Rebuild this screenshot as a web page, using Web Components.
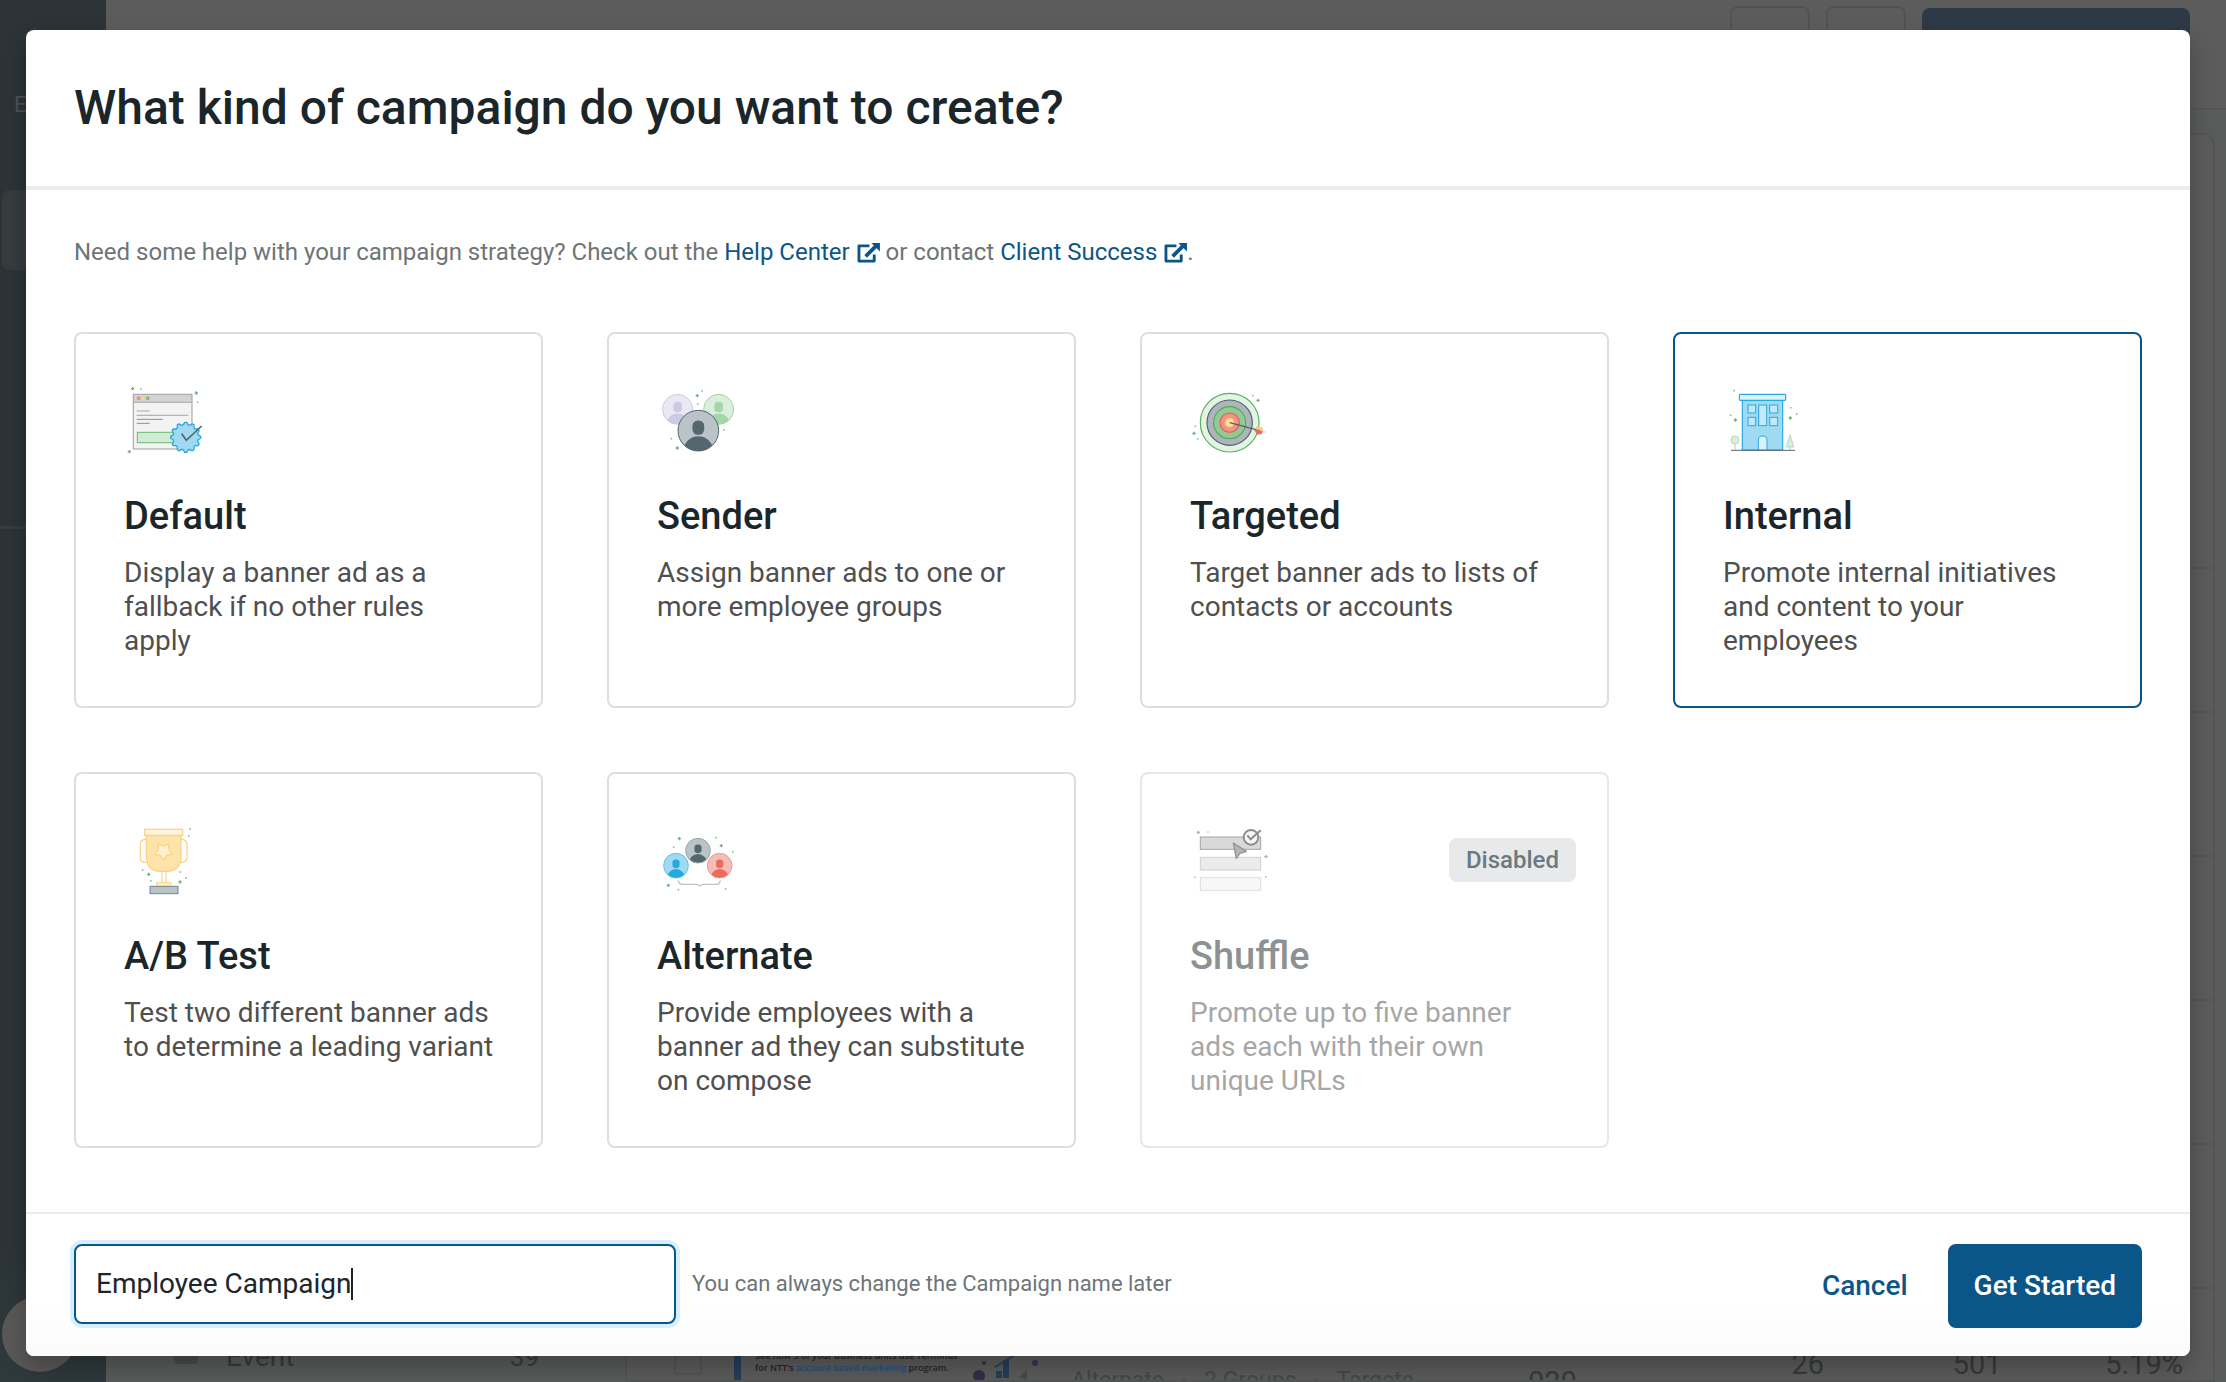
<!DOCTYPE html>
<html lang="en">
<head>
<meta charset="utf-8">
<title>Create campaign</title>
<style>
  html, body { margin: 0; height: 100%; }
  body { font-family: Roboto, "Liberation Sans", sans-serif; color: #1b262b; background: #5c5c5c; overflow: hidden; }
</style>
</head>
<body>
<app-backdrop></app-backdrop>
<campaign-dialog>
  <span slot="title">What kind of campaign do you want to create?</span>
  <span slot="help">Need some help with your campaign strategy? Check out the <external-link href="#help">Help Center</external-link> or contact <external-link href="#success">Client Success</external-link>.</span>
  <campaign-card icon="default">Default<span slot="text">Display a banner ad as a fallback if no other rules apply</span></campaign-card>
  <campaign-card icon="sender">Sender<span slot="text">Assign banner ads to one or more employee groups</span></campaign-card>
  <campaign-card icon="targeted">Targeted<span slot="text">Target banner ads to lists of contacts or accounts</span></campaign-card>
  <campaign-card icon="internal" selected>Internal<span slot="text">Promote internal initiatives and content to your employees</span></campaign-card>
  <campaign-card icon="abtest">A/B Test<span slot="text">Test two different banner ads to determine a leading variant</span></campaign-card>
  <campaign-card icon="alternate">Alternate<span slot="text">Provide employees with a banner ad they can substitute on compose</span></campaign-card>
  <campaign-card icon="shuffle" disabled>Shuffle<span slot="text">Promote up to five banner ads each with their own unique URLs</span></campaign-card>
  <name-field slot="footer" value="Employee Campaign">You can always change the Campaign name later</name-field>
  <action-button slot="actions" kind="plain">Cancel</action-button>
  <action-button slot="actions" kind="primary">Get Started</action-button>
</campaign-dialog>

<script>
const define = (name, html, setup) => customElements.define(name, class extends HTMLElement {
  constructor() {
    super();
    this.attachShadow({ mode: 'open' });
  }
  connectedCallback() {
    this.shadowRoot.innerHTML = typeof html === 'function' ? html(this) : html;
    if (setup) setup(this);
  }
});

/* Illustration helpers */
const plus = (x, y, r = 5, c = '#6cb873') =>
  `<path d="M${x - r} ${y}h${2 * r}M${x} ${y - r}v${2 * r}" stroke="${c}" stroke-width="4"/>`;
const dot = (x, y, c = '#93cc98') => `<circle cx="${x}" cy="${y}" r="3" fill="${c}"/>`;
let clipId = 0;
const person = (x, y, r, bg, fg, ring) => {
  const id = 'clip' + (clipId++);
  return `<clipPath id="${id}"><circle cx="${x}" cy="${y}" r="${r}"/></clipPath>
    <circle cx="${x}" cy="${y}" r="${r}" fill="${bg}"/>
    <g clip-path="url(#${id})" fill="${fg}">
      <rect x="${x - r * .29}" y="${y - r * .5}" width="${r * .58}" height="${r * .7}" rx="${r * .27}"/>
      <ellipse cx="${x}" cy="${y + r}" rx="${r * .74}" ry="${r * .72}"/>
    </g>
    <circle cx="${x}" cy="${y}" r="${r}" fill="none" stroke="${ring}" stroke-width="3"/>`;
};
const burst = (cx, cy, n, outer, inner) => {
  const pts = [];
  for (let i = 0; i < n * 4; i++) {
    const a = (i + .5) * Math.PI / (n * 2) - Math.PI / 2;
    const r = i % 4 < 1 || i % 4 > 2 ? outer : inner;
    pts.push((cx + r * Math.cos(a)).toFixed(1) + ',' + (cy + r * Math.sin(a)).toFixed(1));
  }
  return pts.join(' ');
};

const icons = {
  default: ['42 36 240 240', () => `
    <rect x="70" y="73" width="176" height="164" fill="#f3f3f3"/>
    <rect x="70" y="73" width="176" height="24" fill="#d3d3d3"/>
    <rect x="70" y="73" width="176" height="164" fill="none" stroke="#a9a9a9" stroke-width="3.5"/>
    <path d="M70 97h176" stroke="#a9a9a9" stroke-width="3"/>
    <circle cx="86" cy="85" r="4" fill="#f6b5ae" stroke="#ec6a5c" stroke-width="3"/>
    <circle cx="100" cy="85" r="4" fill="#ffe1a3" stroke="#fdcb6b" stroke-width="3"/>
    <circle cx="113" cy="85" r="4" fill="#a5d5a8" stroke="#4fae58" stroke-width="3"/>
    <path d="M80 123h39" stroke="#c4c4c4" stroke-width="5"/>
    <path d="M80 136h155" stroke="#b4b4b4" stroke-width="4"/>
    <path d="M80 148h78M80 160h39" stroke="#8f8f8f" stroke-width="3"/>
    <rect x="82" y="187" width="130" height="31" fill="#d2ebd3" stroke="#6cb873" stroke-width="3"/>
    <polygon points="${burst(227, 202, 12, 45, 38)}" fill="#9fdaf2" stroke="#26a9e0" stroke-width="4" stroke-linejoin="round"/>
    <path d="M215 191l14 20 46-43" fill="none" stroke="#54666e" stroke-width="5"/>
    ${plus(68, 56)}${dot(93, 57)}${plus(259, 69)}${dot(263, 97)}${plus(58, 245)}`],
  sender: ['36 36 240 240', () => `
    ${person(98, 118, 45, '#ebe8f4', '#cfcae3', '#cfcae3')}
    ${person(221, 118, 45, '#dbeedc', '#a5d5a8', '#a5d5a8')}
    ${person(160, 182, 61, '#bac3c7', '#54666e', '#54666e')}
    ${plus(157, 77)}${dot(171, 63)}${dot(158, 102)}${dot(237, 180)}${dot(79, 206)}${plus(97, 234)}`],
  targeted: ['45 36 240 240', () => `
    <circle cx="164" cy="158" r="88" fill="#e3f3e4" stroke="#57b05f" stroke-width="3.5"/>
    <circle cx="164" cy="158" r="68" fill="#aeb5ba" stroke="#54626b" stroke-width="3.5"/>
    <circle cx="164" cy="158" r="48" fill="#92c996" stroke="#4fae58" stroke-width="3.5"/>
    <circle cx="164" cy="158" r="29" fill="#f0948a" stroke="#ea5f50" stroke-width="3.5"/>
    <circle cx="164" cy="158" r="13" fill="#fde0a0" stroke="#fcc762" stroke-width="4"/>
    <path d="M164 158l90 24" stroke="#54626b" stroke-width="3.5"/>
    <path d="M238 177l8-8 14 2 6 11z" fill="#fccd73"/>
    <path d="M238 180l26 2-4 10-14 2z" fill="#ea6a5c"/>
    <path d="M262 186h10" stroke="#dedfec" stroke-width="5"/>
    ${dot(234, 77)}${plus(249, 91)}${dot(61, 169)}${plus(57, 190)}${dot(68, 207)}`],
  internal: ['39 36 240 240', () => `
    <rect x="97" y="90" width="121" height="150" fill="#9fdaf2" stroke="#26a9e0" stroke-width="3.5"/>
    <rect x="88" y="73" width="139" height="18" rx="3" fill="#d8f1fb" stroke="#26a9e0" stroke-width="3.5"/>
    <g fill="#c3e8f7" stroke="#26a9e0" stroke-width="3">
      <rect x="114" y="105" width="23" height="24"/><rect x="114" y="142" width="23" height="25"/>
      <rect x="146" y="105" width="24" height="62"/>
      <rect x="179" y="105" width="24" height="24"/><rect x="179" y="142" width="24" height="25"/>
    </g>
    <path d="M145 240v-29q0-13 13-13t13 13v29z" fill="#d8f1fb" stroke="#26a9e0" stroke-width="3"/>
    <path d="M75 222v18M240 231v9" stroke="#cfe6d0" stroke-width="5"/>
    <circle cx="75" cy="210" r="12" fill="#dbeedc" stroke="#b5d9b7" stroke-width="3"/>
    <path d="M240 194l-11 37h22z" fill="#dbeedc" stroke="#b5d9b7" stroke-width="3"/>
    <path d="M63 241h192" stroke="#54666e" stroke-width="3"/>
    ${dot(72, 62)}${dot(62, 136)}${plus(76, 150)}${dot(242, 113)}${dot(260, 132)}${plus(241, 144)}`],
  abtest: ['42 36 240 240', () => `
    <path d="M109 88q-18 0-18 16v39q0 14 18 14M213 88q18 0 18 16v39q0 14-18 14" fill="#fff" stroke="#fdcf80" stroke-width="3.5"/>
    <path d="M109 76v62q0 46 44 46h16q44 0 44-46v-62z" fill="#fee3ab" stroke="#fdcf80" stroke-width="3.5"/>
    <rect x="104" y="58" width="114" height="18" fill="#fff5df" stroke="#fdcf80" stroke-width="3.5"/>
    <path d="M156 185v34M168 185v34" stroke="#fdd48c" stroke-width="3.5"/>
    <rect x="140" y="218" width="43" height="11" fill="#fff1d0" stroke="#fdd48c" stroke-width="3"/>
    <polygon points="160,151 151,136 134,133 144,120 145,102 160,108 176,102 177,120 187,133 169,136" fill="#fff1d0" stroke="#fdcb6b" stroke-width="3" stroke-linejoin="round"/>
    <rect x="120" y="229" width="84" height="22" fill="#bac3c7" stroke="#75858c" stroke-width="3"/>
    ${dot(240, 57)}${dot(236, 78)}${dot(98, 180)}${plus(116, 193)}${dot(123, 212)}${dot(211, 186)}${dot(228, 204)}${plus(210, 216)}`],
  alternate: ['36 36 240 240', () => `
    ${person(159, 122, 37, '#bac3c7', '#54666e', '#9aa6ab')}
    ${person(93, 167, 37, '#9fdaf2', '#26a9e0', '#5fc1ea')}
    ${person(224, 167, 37, '#f5bdb7', '#ea6a5c', '#f09a90')}
    <path d="M100 211q2 12 12 12h40q9 0 12 5q3-5 12-5h38q10 0 12-12" fill="none" stroke="#bac3c7" stroke-width="4"/>
    ${plus(103, 86)}${dot(86, 112)}${dot(213, 83)}${plus(229, 107)}${dot(263, 125)}${plus(70, 226)}${dot(100, 239)}${dot(242, 237)}`],
  shuffle: ['45 36 240 240', () => `
    <rect x="76" y="81" width="181" height="37" fill="#b5b5b5" stroke="#4c4c4c" stroke-width="3"/>
    <rect x="76" y="142" width="181" height="38" fill="#d8d8d8" stroke="#a3a3a3" stroke-width="3"/>
    <rect x="76" y="203" width="181" height="38" fill="#f1f1f1" stroke="#bdbdbd" stroke-width="3"/>
    <circle cx="228" cy="82" r="22" fill="#efefef" stroke="#1c1c1c" stroke-width="6"/>
    <path d="M217 76l10 12 30-27" fill="none" stroke="#1c1c1c" stroke-width="6"/>
    <path d="M175 99l39 25-19 6-11 15z" fill="#6f6f6f" stroke="#2c2c2c" stroke-width="4" stroke-linejoin="round"/>
    ${plus(70, 67, 5, '#666')}${dot(99, 66, '#aaa')}${plus(273, 140, 5, '#666')}${dot(59, 202, '#888')}${dot(272, 201, '#888')}`],
};

define('campaign-icon', el => {
  const [box, draw] = icons[el.getAttribute('name')];
  return `<style>:host{display:block;width:80px;height:80px}svg{display:block}</style>
    <svg viewBox="${box}" width="80" height="80" fill="none" aria-hidden="true">${draw()}</svg>`;
});

define('external-link', el => `
  <style>
    :host { display: inline; }
    a { color: #0b5688; text-decoration: none; }
    svg { width: 23px; height: 21px; margin-left: 1px; vertical-align: -3px; }
  </style>
  <a href="${el.getAttribute('href')}"><slot></slot>
    <svg viewBox="0 0 24 22" fill="none" aria-hidden="true">
      <path d="M13 4H2v16h16v-7" stroke="#0b5688" stroke-width="3" stroke-linejoin="round"/>
      <path d="M9 15L20 4" stroke="#0b5688" stroke-width="4"/>
      <path d="M15 1h9v9z" fill="#0b5688"/>
    </svg></a>`);

define('campaign-card', el => {
  const off = el.hasAttribute('disabled');
  const on = el.hasAttribute('selected');
  return `
  <style>
    :host { display: flex; position: relative; }
    button { flex: 1; display: flex; flex-direction: column; align-items: flex-start; margin: 0; padding: 48px 46px 48px 48px;
      border: 2px solid #dcdfe2; border-radius: 8px; background: #fff; font: inherit; color: inherit; text-align: left; cursor: pointer; }
    button.on { border-color: #0b5688; }
    button:disabled { opacity: .5; border-color: #ccd0d4; cursor: default; }
    .name { margin-top: 30px; font-size: 38px; line-height: 48px; font-weight: 500; }
    .text { margin-top: 16px; font-size: 28px; line-height: 34px; color: #4f4f4f; }
    .badge { position: absolute; top: 66px; right: 33px; padding: 0 17px; border-radius: 8px; background: #e7e9ea;
      color: #6c797f; font-size: 24px; line-height: 44px; font-weight: 500; }
  </style>
  <button type="button" class="${on ? 'on' : ''}" aria-pressed="${on}" ${off ? 'disabled' : ''}>
    <campaign-icon name="${el.getAttribute('icon')}"></campaign-icon>
    <span class="name"><slot></slot></span>
    <span class="text"><slot name="text"></slot></span>
  </button>
  ${off ? '<span class="badge">Disabled</span>' : ''}`;
});

define('name-field', el => `
  <style>
    :host { display: flex; align-items: center; gap: 16px; }
    .box { display: flex; align-items: center; box-sizing: border-box; width: 602px; height: 80px; padding: 0 20px;
      border: 2px solid #0b5688; border-radius: 8px; background: #fff; box-shadow: 0 0 0 4px #d6efff; cursor: text; }
    input { field-sizing: content; min-width: 0; margin: 0; padding: 0; border: 0; outline: 0; background: none;
      font: 28px/36px Roboto, "Liberation Sans", sans-serif; color: #1b262b; }
    .caret { width: 2px; height: 32px; background: #1b262b; }
    label { font-size: 22px; line-height: 28px; color: #6d7577; }
  </style>
  <div class="box"><input id="name" type="text" value="${el.getAttribute('value')}"><span class="caret"></span></div>
  <label for="name"><slot></slot></label>`);

define('action-button', el => `
  <style>
    :host { display: block; }
    button { height: 84px; margin: 0; padding: 0 26px; border: 0; border-radius: 8px; background: none; color: #0b5688;
      font: 500 28px/36px Roboto, "Liberation Sans", sans-serif; cursor: pointer; }
    .primary { background: #0b5688; color: #fff; }
  </style>
  <button type="button" class="${el.getAttribute('kind')}"><slot></slot></button>`);

define('campaign-dialog', `
  <style>
    :host { position: fixed; inset: 0; display: flex; padding: 30px 36px 26px 26px; align-items: flex-start; }
    section { flex: 1; border-radius: 8px; background: #fff; box-shadow: 0 12px 24px rgba(0,0,0,.25); overflow: hidden; }
    header { padding: 48px; border-bottom: 4px solid #ebeced; }
    h1 { margin: 0; font-size: 48px; line-height: 60px; font-weight: 500; }
    .body { padding: 46px 48px 64px; }
    p { margin: 0 0 64px; font-size: 24px; line-height: 32px; color: #6d7577; }
    .grid { display: grid; grid-template-columns: repeat(4, minmax(0, 1fr)); gap: 64px; }
    footer { display: flex; align-items: flex-start; justify-content: space-between; padding: 30px 48px 28px;
      border-top: 2px solid #ebeced; background: linear-gradient(#fff 60%, #fbfbfb); }
    .actions { display: flex; gap: 14px; }
  </style>
  <section role="dialog" aria-labelledby="t">
    <header><h1 id="t"><slot name="title"></slot></h1></header>
    <div class="body">
      <p><slot name="help"></slot></p>
      <div class="grid"><slot></slot></div>
    </div>
    <footer><slot name="footer"></slot><div class="actions"><slot name="actions"></slot></div></footer>
  </section>`);

/* Dimmed application page behind the dialog */
define('app-sidebar', `
  <style>
    :host { display: flex; flex-direction: column; justify-content: space-between; flex: none; width: 106px; overflow: hidden;
      background: linear-gradient(#2c3437 90%, #2f3a3e); color: #4b5255; }
    .label { padding: 94px 0 0 14px; font-size: 22px; line-height: 22px; }
    .item { height: 80px; margin: 74px 0 0 2px; border-radius: 8px 0 0 8px; background: #363d3f; }
    .rule { height: 3px; margin-top: 256px; background: #363d3f; }
    .avatar { width: 76px; height: 76px; margin: 0 0 10px 2px; border-radius: 50%; background: #5b5958; }
  </style>
  <div><div class="label">E</div><div class="item"></div><div class="rule"></div></div>
  <div class="avatar"></div>`);

define('app-topbar', `
  <style>
    :host { display: flex; justify-content: flex-end; gap: 16px; box-sizing: border-box; height: 110px; padding: 6px 36px 0 0; border-bottom: 2px solid #545655; }
    i { box-sizing: border-box; width: 80px; height: 80px; border: 2px solid #525252; border-radius: 8px; }
    b { width: 268px; height: 76px; margin-top: 2px; border-radius: 8px; background: #2d3a45; }
  </style><i></i><i></i><b></b>`);

define('folder-list', `
  <style>
    :host { display: flex; flex: none; align-items: flex-end; box-sizing: border-box; width: 519px; padding: 0 86px 8px 68px;
      background: #595c5b; color: #383b3b; font-size: 28px; line-height: 34px; }
    i { width: 24px; height: 24px; margin: 0 28px 10px 0; border-radius: 4px; background: #4a4c4c; }
    .n { margin-left: auto; font-size: 26px; }
  </style><i></i><span>Event</span><span class="n">39</span>`);

define('campaign-row', `
  <style>
    :host { display: flex; align-items: flex-start; box-sizing: border-box; height: 144px; padding: 58px 30px 0 47px; border-top: 2px solid #545655; color: #383b3b; font-size: 29px; white-space: nowrap; }
    .check { box-sizing: border-box; width: 28px; height: 28px; border: 2px solid #525554; border-radius: 4px; }
    .ad { box-sizing: border-box; width: 320px; height: 60px; margin-left: 32px; padding: 3px 0 0 14px; border-left: 7px solid #24405a;
      display: flex; gap: 16px; font: 600 9px/12px "Open Sans", sans-serif; color: #232326; }
    .copy { width: 200px; }
    .ad em { font-style: normal; color: #24507a; }
    .ad hr { width: 132px; margin: 6px 0 0; border: 0; border-top: 1px solid #222; }
    svg { flex: none; }
    .tags { display: flex; gap: 17px; box-sizing: border-box; width: 457px; margin-left: 17px; padding-top: 20px; font-size: 23px; line-height: 28px; color: #454848; }
    .num { line-height: 34px; text-align: right; }
    .id { padding-top: 18px; }
    .sends { flex: 248; }
    .clicks { flex: 178; }
    .rate { flex: 182; }
  </style>
  <span class="check"></span>
  <div class="ad"><div class="copy">See how 3 of your business units use Terminus<br>for NTT's <em>account based marketing</em> program.<hr></div>
    <svg width="72" height="34" viewBox="0 0 72 34"><circle cx="8" cy="26" r="6" fill="#352f47"/><circle cx="13" cy="13" r="2" fill="#3a3358"/><circle cx="64" cy="13" r="3" fill="#3a3358"/><path d="M28 28v-7M35 28V10" stroke="#24405a" stroke-width="6"/><path d="M24 17l20-12" stroke="#24405a" stroke-width="2"/><path d="M48 27l8-7v10z" fill="#4a4b4d"/></svg></div>
  <div class="tags"><span>Alternate</span><span>·</span><span>2 Groups</span><span>·</span><span>Targete</span></div>
  <span class="num id">020</span>
  <span class="num sends">26</span><span class="num clicks">501</span><span class="num rate">5.19%</span>`);

define('campaign-table', `
  <style>
    :host { display: flex; flex: 1; flex-direction: column; box-sizing: border-box; margin: 23px 11px 0 0; border: 2px solid #545655; border-radius: 0 12px 0 0; background: #5c5c5c; overflow: hidden; }
    .head { flex: none; height: 432px; }
    .line { flex: none; box-sizing: border-box; height: 144px; border-top: 2px solid #545655; }
    campaign-row { flex: none; }
  </style>
  <div class="head"></div><div class="line"></div><div class="line"></div><div class="line"></div><div class="line"></div><div class="line"></div>
  <campaign-row></campaign-row>`);

define('app-backdrop', `
  <style>
    :host { position: fixed; inset: 0; display: flex; overflow: hidden; background: #5c5c5c; }
    main { flex: 1; display: flex; flex-direction: column; min-width: 0; }
    .content { flex: 1; display: flex; min-height: 0; background: #595c5b; }
  </style>
  <app-sidebar></app-sidebar>
  <main><app-topbar></app-topbar><div class="content"><folder-list></folder-list><campaign-table></campaign-table></div></main>`);
</script>
</body>
</html>
